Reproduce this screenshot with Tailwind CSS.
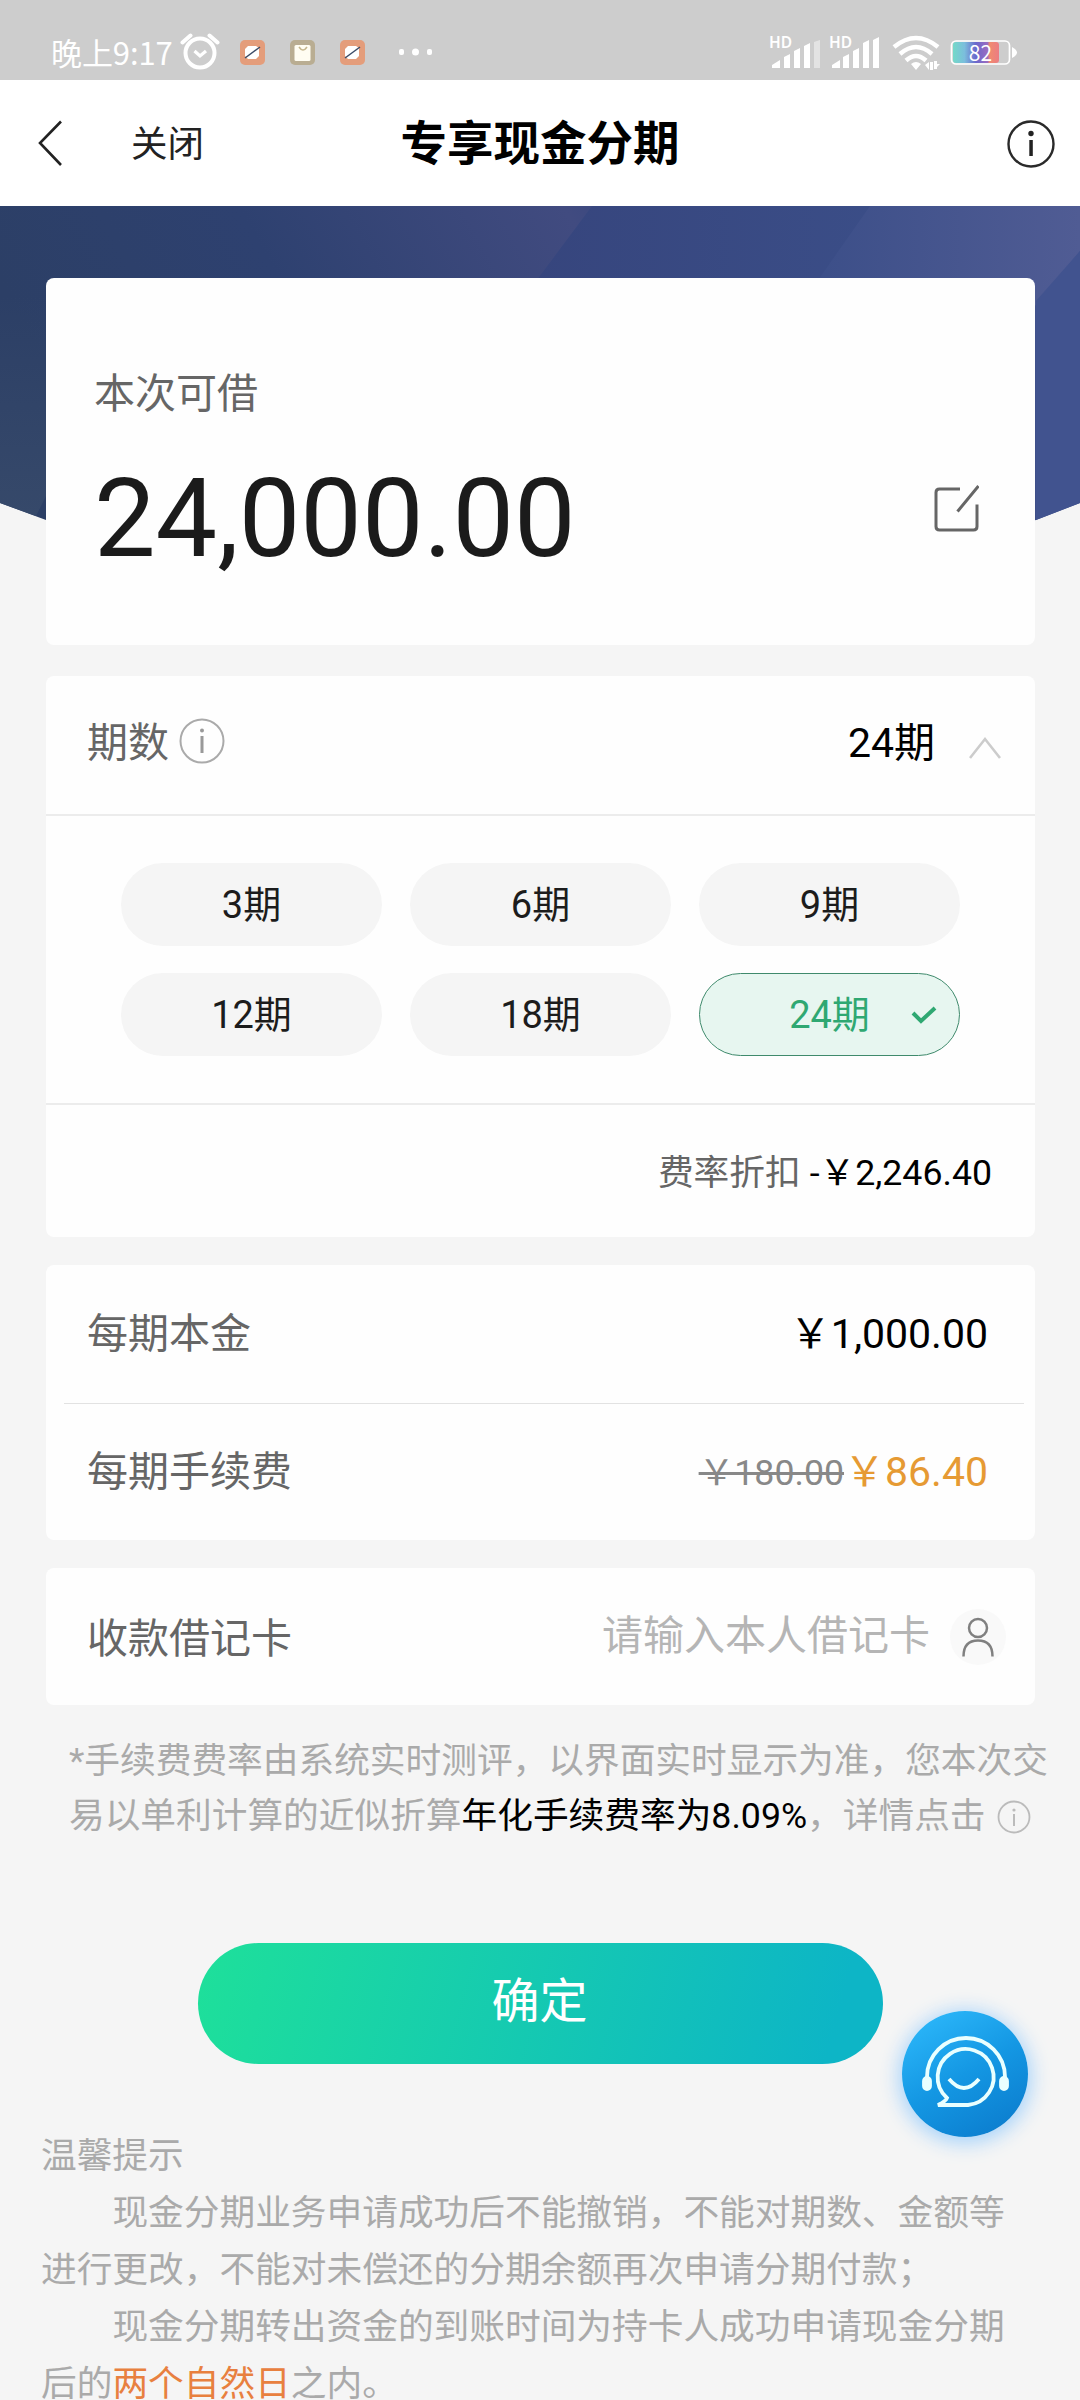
<!DOCTYPE html>
<html lang="zh-CN">
<head>
<meta charset="utf-8">
<title>专享现金分期</title>
<script src="https://cdn.jsdelivr.net/npm/@tailwindcss/browser@4"></script>
</head>
<body class="w-[1080px] h-[2400px] overflow-hidden bg-[#f5f5f5] font-['Roboto','Noto_Sans_CJK_SC',sans-serif] text-[41px] leading-none text-[#666]">

<!-- Status bar -->
<div class="flex h-20 items-start justify-between bg-[#cdcdcd] text-white">
  <div class="flex h-[34px] mt-[35px] ml-[51px] items-center">
    <span class="w-[129px] whitespace-nowrap text-[31px] font-['Noto_Sans_CJK_SC',sans-serif] tracking-[-0.1px] leading-[34px]">晚上9:17</span>
    <svg class="w-10 h-[38px]" viewBox="0 0 40 38" fill="none" stroke="#fff"><circle cx="20" cy="20" r="14.500" stroke-width="4"/><path d="M14.500 18l5.500 5 6-5" stroke-width="3.200"/><path d="M2.500 9.500l8-7M37.500 9.500l-8-7" stroke-width="4" stroke-linecap="round"/></svg>
    <svg class="ml-5 w-[25px] h-[25px]" viewBox="0 0 25 25"><rect width="25" height="25" rx="5" fill="#e49d7b"/><path d="M8 6h8l3 2v8l-3 3H8l-3-3V9z" fill="#fff"/><path d="M5 18L20 7" stroke="#3b4b66" stroke-width="1.500"/></svg>
    <svg class="ml-[25px] w-[25px] h-[25px]" viewBox="0 0 25 25"><rect width="25" height="25" rx="5" fill="#b9ad92"/><rect x="4.500" y="5" width="16" height="16" rx="1.500" fill="#fffdf2"/><path d="M9 7q4 6 8 0" stroke="#c4b58d" stroke-width="1.500" fill="none"/></svg>
    <svg class="ml-[25px] w-[25px] h-[25px]" viewBox="0 0 25 25"><rect width="25" height="25" rx="5" fill="#e49d7b"/><path d="M8 6h8l3 2v8l-3 3H8l-3-3V9z" fill="#fff"/><path d="M5 18L20 7" stroke="#3b4b66" stroke-width="1.500"/></svg>
    <svg class="ml-[34px] w-[34px] h-2" viewBox="0 0 34 8" fill="#fff"><rect x="0" y="1" width="5" height="6" rx="2"/><circle cx="16.500" cy="4" r="3.500"/><rect x="28" y="1" width="5" height="6" rx="2"/></svg>
  </div>
  <svg class="w-[270px] h-[60px] mt-5 mr-[50px]" viewBox="760 20 270 60" fill="#fff">
    <text x="769" y="48" font-size="15.500" font-weight="600" font-family="Noto Sans, sans-serif">HD</text>
    <path d="M772 68v-3l8-5v8zM784 68V57l6-3v14zM794 68V51l6-3v20zM804 68V46l6-3v25z"/><path d="M814 68V42l6-2v28z" opacity=".45"/>
    <text x="829" y="48" font-size="15.500" font-weight="600" font-family="Noto Sans, sans-serif">HD</text>
    <path d="M832 68v-3l8-5v8zM843 68V57l6-3v14zM853 68V51l6-3v20zM863 68V43l6-3v28zM873 68V40l6-3v31z"/>
    <g fill="none" stroke="#fff" stroke-width="4.500"><path d="M894 47q22-18 44 0M900 54q16-14 32 0M906 60.500q10-9 20 0"/></g>
    <path d="M911 64q5-4 10 0l-5 6zM925 65l4-3v8zM930 62h3v8h-3zM934 61h3v8h-3zM937 67l3-3h-3z"/>
    <defs><linearGradient id="bat"><stop offset="0" stop-color="#74d9c8"/><stop offset=".25" stop-color="#7bbedc"/><stop offset=".5" stop-color="#6a67cc"/><stop offset=".75" stop-color="#9b6cc0"/><stop offset=".8" stop-color="#f08b70"/><stop offset="1" stop-color="#ec7c83"/></linearGradient></defs>
    <rect x="953" y="42" width="46" height="21" rx="3" fill="url(#bat)"/>
    <rect x="951.500" y="41" width="58" height="23" rx="4.500" fill="none" stroke="#fff" stroke-width="1.700"/>
    <path d="M1012 47q10 5.500 0 11z"/>
    <text x="980.500" y="61" font-size="21" text-anchor="middle" font-family="Noto Sans CJK SC, sans-serif">82</text>
  </svg>
</div>

<!-- Navigation bar -->
<header class="grid grid-cols-[1fr_auto_1fr] h-[126px] items-center bg-white text-[#222]">
  <div class="flex items-center">
    <svg class="ml-9 w-7 h-12" viewBox="0 0 28 48" fill="none" stroke="#222" stroke-width="2.600"><path d="M25 2.500L4 24l21 22"/></svg>
    <span class="ml-[67px] pt-1 text-[36.5px]">关闭</span>
  </div>
  <h1 class="pt-[3px] text-[46.5px] font-bold text-black">专享现金分期</h1>
  <svg class="justify-self-end mr-[24px] w-[50px] h-[50px]" viewBox="0 0 50 50"><circle cx="25" cy="26" r="22.500" fill="none" stroke="#2a2a2a" stroke-width="2.400"/><circle cx="25" cy="15.500" r="2.700" fill="#222"/><rect x="23.300" y="22" width="3.500" height="16" fill="#222"/></svg>
</header>

<main class="relative">
  <svg class="absolute inset-x-0 top-0 w-[1080px] h-[360px]" viewBox="0 0 1080 360">
    <defs>
      <linearGradient id="sky" x1="0" x2="1" y1=".2" y2="0"><stop offset="0" stop-color="#2c3f66"/><stop offset=".25" stop-color="#2e4170"/><stop offset=".54" stop-color="#414b80"/><stop offset=".6" stop-color="#384780"/><stop offset="1" stop-color="#43548f"/></linearGradient>
      <linearGradient id="mid" x1="0" x2="1"><stop offset="0" stop-color="#36457d"/><stop offset="1" stop-color="#3b4e88"/></linearGradient>
      <linearGradient id="right" x1="0" x2="1"><stop offset="0" stop-color="#3b4e88"/><stop offset="1" stop-color="#505c94"/></linearGradient>
      <linearGradient id="left" x1="0" x2="0" y1="0" y2="1"><stop offset="0" stop-color="#36496a" stop-opacity="0"/><stop offset="1" stop-color="#36496a"/></linearGradient>
    </defs>
    <path d="M0 0H1080V297L1036 314Q540 450 46 314L0 297Z" fill="url(#sky)"/>
    <path d="M592 0H900L800 90H525Z" fill="url(#mid)"/>
    <path d="M870 0H1080V45L1035 100H800Z" fill="url(#right)"/>
    <path d="M1080 45V297L1036 314V95Z" fill="#41538f"/>
    <path d="M0 90H46V290L36 310L0 297Z" fill="url(#left)"/>
  </svg>

  <div class="relative flex flex-col ml-[46px] w-[989px] pt-[72px]">
    <section class="flex h-[367px] items-center justify-between rounded-lg bg-[#fefefe] pl-12 pr-[56px]">
      <div class="pt-[25px]">
        <p class="text-[41px]">本次可借</p>
        <p class="mt-[49px] text-[109.6px] text-[#1b1b1b]">24,000.00</p>
      </div>
      <svg class="mt-[92px] w-[46px] h-[48px]" viewBox="0 0 46 48" fill="none" stroke="#666" stroke-width="3"><path d="M27 5H6.500Q3 5 3 8.500V42.500Q3 46 6.500 46H40.500Q44 46 44 42.500V20.500M24.500 27.500L45.500 2"/></svg>
    </section>

    <section class="mt-[31px] flex h-[561px] flex-col rounded-lg bg-[#fefefe]">
      <div class="flex h-[140px] items-center border-b-2 border-[#ececec] pl-[41px] pr-[34px] pb-2">
        <span class="pt-1">期数</span>
        <svg class="ml-2.5 w-[46px] h-[46px]" viewBox="0 0 46 46"><circle cx="23" cy="23" r="21.500" fill="none" stroke="#aaa" stroke-width="2"/><circle cx="23" cy="12.500" r="2" fill="#999"/><path d="M23 18v17" stroke="#999" stroke-width="3"/></svg>
        <span class="ml-auto pt-1 text-black">24期</span>
        <svg class="ml-[34px] mt-3 w-8 h-6" viewBox="0 0 32 24" fill="none" stroke="#ccc" stroke-width="2.600"><path d="M1 23L16 4l15 19"/></svg>
      </div>
      <div class="grid h-[289px] grid-cols-3 content-start gap-x-7 gap-y-[27px] border-b-2 border-[#ececec] px-[75px] pt-[47px] text-[38px] text-[#1c1c1c]">
        <div class="flex h-[83px] items-center justify-center rounded-full bg-[#f5f5f5]">3期</div>
        <div class="flex h-[83px] items-center justify-center rounded-full bg-[#f5f5f5]">6期</div>
        <div class="flex h-[83px] items-center justify-center rounded-full bg-[#f5f5f5]">9期</div>
        <div class="flex h-[83px] items-center justify-center rounded-full bg-[#f5f5f5]">12期</div>
        <div class="flex h-[83px] items-center justify-center rounded-full bg-[#f5f5f5]">18期</div>
        <div class="relative flex h-[83px] items-center justify-center rounded-full border border-[#3f8a6c] bg-[#e7f6f0] text-[#2fa872]">24期
          <svg class="absolute right-[21px] top-[31px] w-7 h-[20px]" viewBox="0 0 28 20" fill="none" stroke="#2fa872" stroke-width="4"><path d="M3 8l8 8L25 3"/></svg>
        </div>
      </div>
      <div class="flex flex-1 items-center justify-end pr-[43px] pt-1.5 text-[35.7px]">
        <span>费率折扣</span><span class="ml-[9px] text-black">-￥2,246.40</span>
      </div>
    </section>

    <section class="mt-7 flex h-[275px] flex-col rounded-lg bg-[#fefefe]">
      <div class="flex h-[138px] items-center justify-between pl-[41px] pr-[47px]"><span>每期本金</span><span class="text-black">￥1,000.00</span></div>
      <div class="ml-[18px] mr-[11px] h-px bg-[#e2e2e2]"></div>
      <div class="flex flex-1 items-center pl-[41px] pr-[47px] pt-px"><span>每期手续费</span><span class="ml-auto pt-0.5 text-[35.7px] text-[#888] line-through">￥180.00</span><span class="text-[#e69a33]">￥86.40</span></div>
    </section>

    <section class="mt-7 flex h-[137px] items-center rounded-lg bg-[#fefefe] pl-[41px] pr-[29px]">
      <span class="pt-[5px]">收款借记卡</span>
      <span class="ml-auto text-[#b5b5b5]">请输入本人借记卡</span>
      <span class="ml-5 flex size-[56px] items-center justify-center rounded-full bg-[#f9f9f9]"><svg class="w-9 h-10" viewBox="0 0 36 40" fill="none" stroke="#808080" stroke-width="2.500"><circle cx="18" cy="11" r="9"/><path d="M3.500 39.500Q3.500 23.500 18 23.500T32.500 39.500"/></svg></span>
    </section>
  </div>

  <div class="relative mt-[29px] ml-[69px] text-[35.7px] leading-[55px] text-[#aaa] whitespace-nowrap">
    <p>*手续费费率由系统实时测评，以界面实时显示为准，您本次交</p>
    <p class="flex items-center">易以单利计算的近似折算<span class="text-black">年化手续费率为8.09%</span>，详情点击
      <svg class="ml-[11px] w-[34px] h-[34px]" viewBox="0 0 34 34"><circle cx="17" cy="17" r="15.500" fill="none" stroke="#bbb" stroke-width="1.800"/><circle cx="17" cy="10" r="1.600" fill="#bbb"/><path d="M17 14v12" stroke="#bbb" stroke-width="2"/></svg></p>
  </div>

  <button class="relative mt-[99px] ml-[198px] flex h-[121px] w-[685px] items-center justify-center rounded-full bg-linear-[105deg,#1ee09a,#0db5c6_92%] pb-[3px] pr-0.5 text-[48px] text-white">确定</button>

  <div class="relative mt-[64px] ml-[41px] text-[35.7px] leading-[57px] text-[#aaa] whitespace-nowrap">
    <p>温馨提示</p>
    <p class="indent-[2em]">现金分期业务申请成功后不能撤销，不能对期数、金额等</p>
    <p>进行更改，不能对未偿还的分期余额再次申请分期付款；</p>
    <p class="indent-[2em]">现金分期转出资金的到账时间为持卡人成功申请现金分期</p>
    <p>后的<span class="text-[#e8803f]">两个自然日</span>之内。</p>
  </div>
</main>

<!-- Customer service floating button -->
<div class="absolute left-[902px] top-[2011px] size-[126px] rounded-full bg-linear-[150deg,#2db9fb_5%,#1497e3_50%,#0a78ca] shadow-[0_3px_20px_3px_#a4d2fb]">
  <svg class="size-[126px]" viewBox="0 0 126 126" fill="none" stroke="#e9ffff" stroke-width="3.800"><path d="M25 66A39 39 0 0 1 103 66"/><path d="M45 87A28 28 0 1 1 66 94H36Q44 90 45 87Z"/><path d="M47 68q15 18 30 0"/><rect x="22" y="67" width="6" height="11" rx="3" fill="#e9ffff"/><rect x="99" y="67" width="6" height="11" rx="3" fill="#e9ffff"/></svg>
</div>
</body>
</html>
